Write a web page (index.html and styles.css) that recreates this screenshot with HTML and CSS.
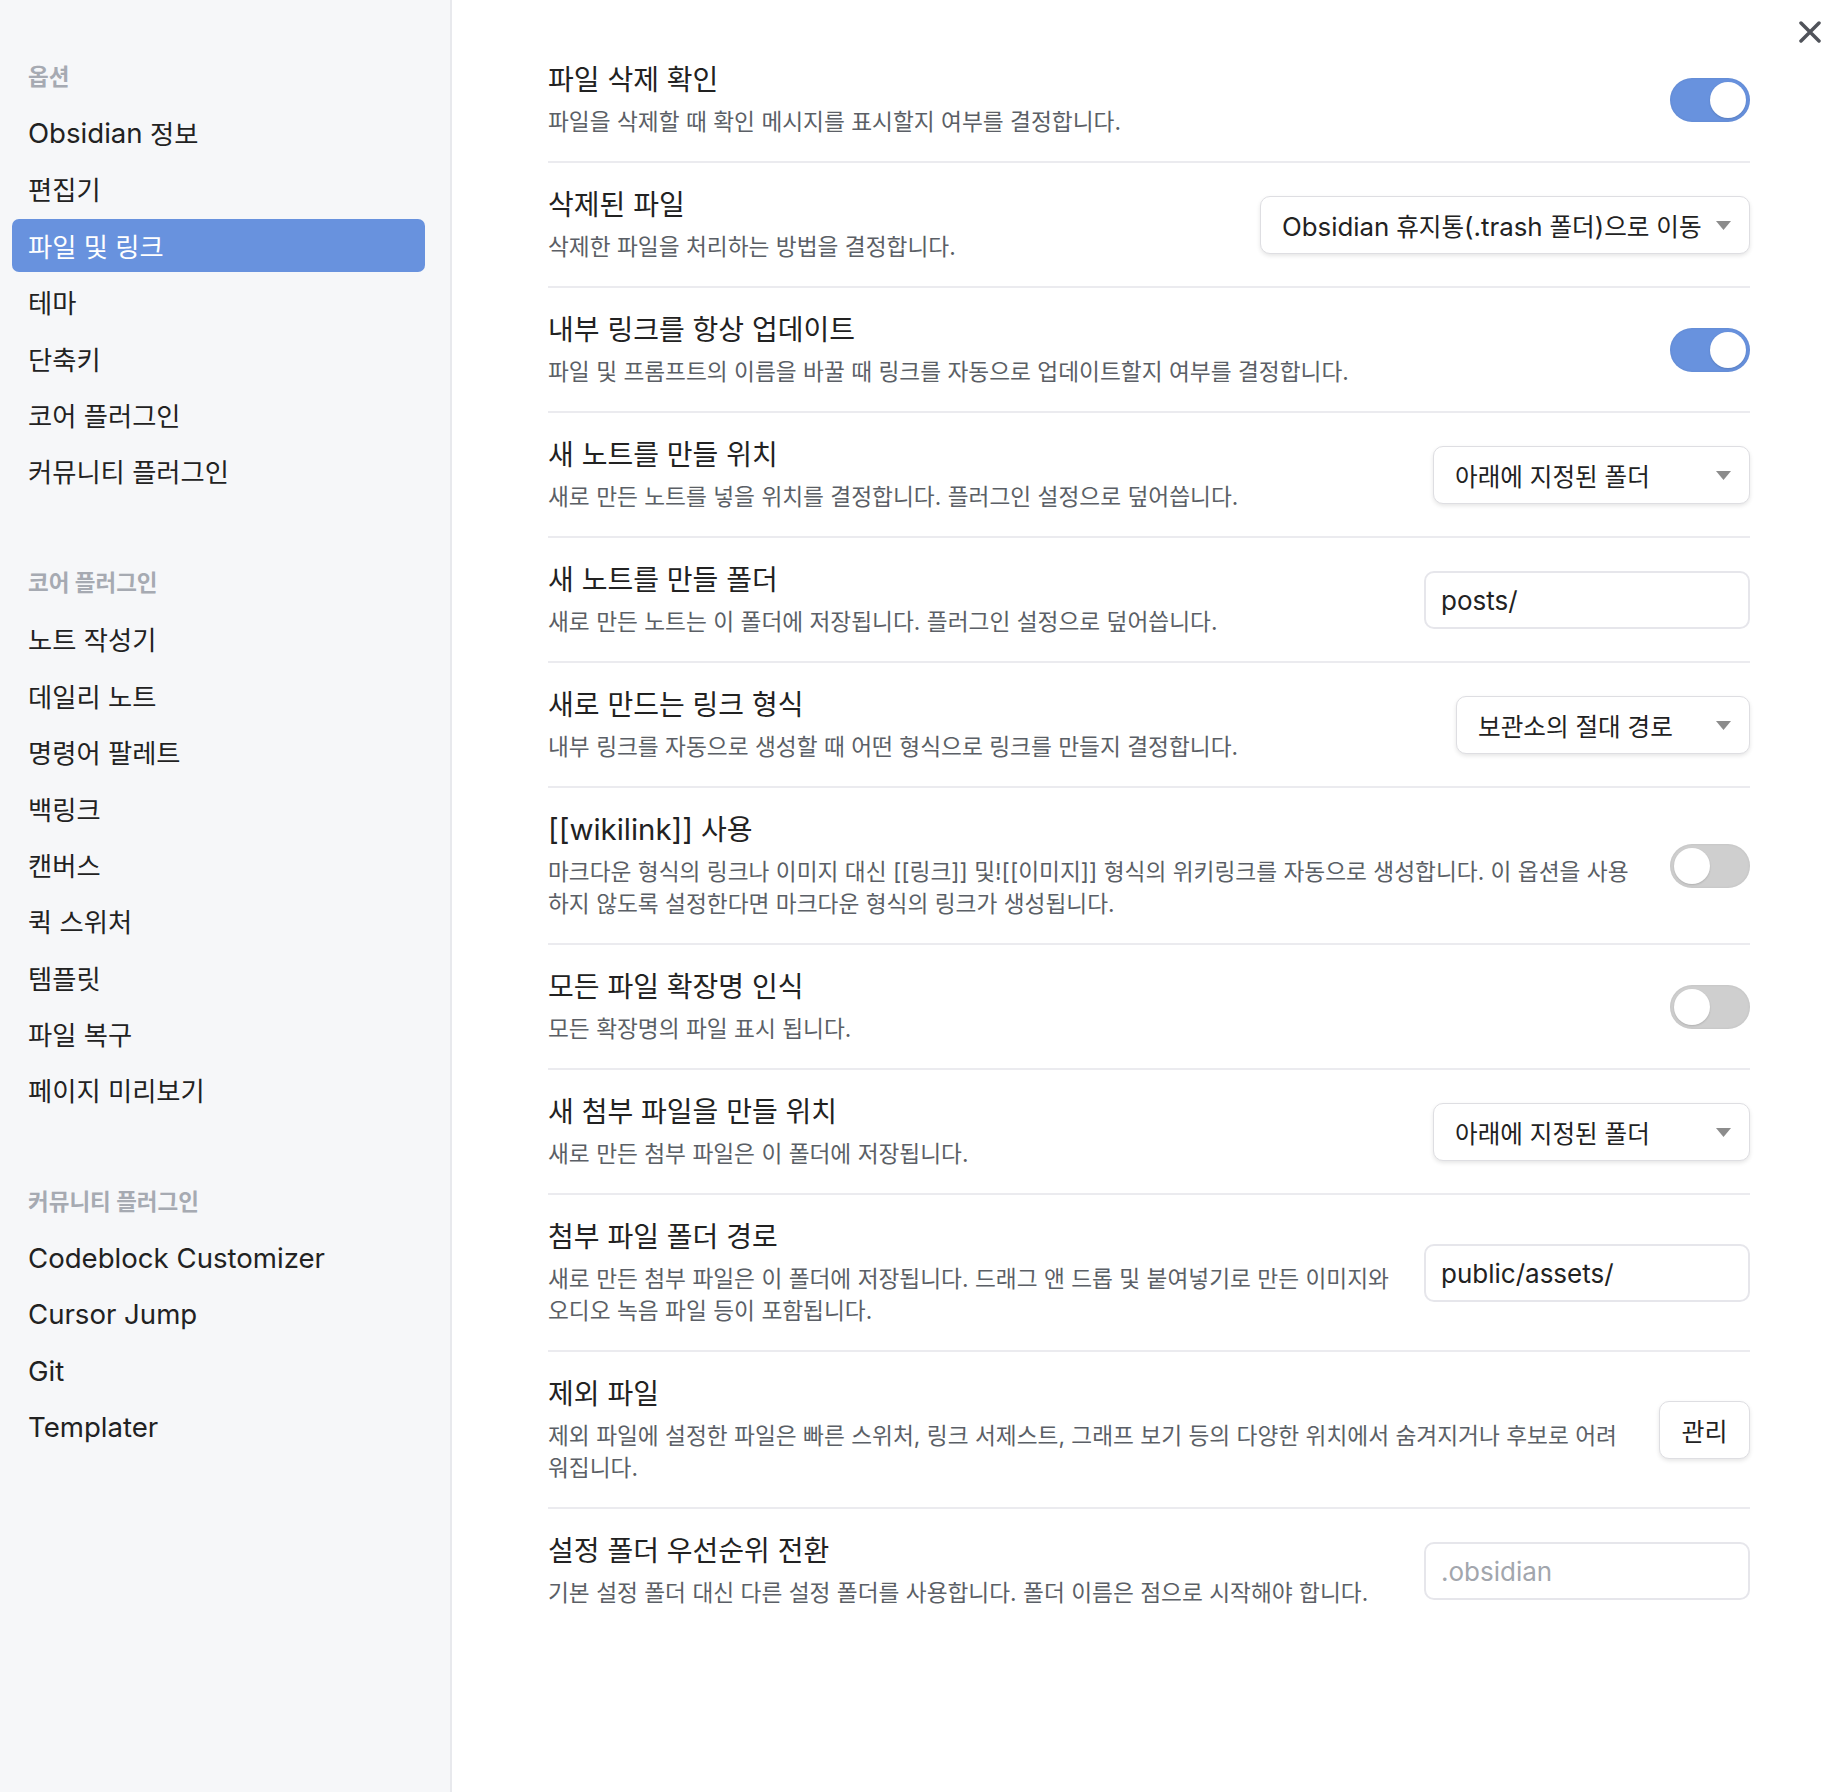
FILE: index.html
```html
<!DOCTYPE html>
<html lang="ko">
<head>
  <meta charset="UTF-8">
  <meta name="viewport" content="width=device-width, initial-scale=1.0">
  <link rel="stylesheet" href="styles.css">
  <title>설정 - 파일 및 링크</title>
</head>
<body>

<nav class="sidebar">
  <div class="nav-group">
    <div class="nav-header">옵션</div>
    <div class="nav-item"><span class="en">Obsidian</span>&nbsp;정보</div>
    <div class="nav-item">편집기</div>
    <div class="nav-item active">파일 및 링크</div>
    <div class="nav-item">테마</div>
    <div class="nav-item">단축키</div>
    <div class="nav-item">코어 플러그인</div>
    <div class="nav-item">커뮤니티 플러그인</div>
  </div>
  <div class="nav-group">
    <div class="nav-header">코어 플러그인</div>
    <div class="nav-item">노트 작성기</div>
    <div class="nav-item">데일리 노트</div>
    <div class="nav-item">명령어 팔레트</div>
    <div class="nav-item">백링크</div>
    <div class="nav-item">캔버스</div>
    <div class="nav-item">퀵 스위처</div>
    <div class="nav-item">템플릿</div>
    <div class="nav-item">파일 복구</div>
    <div class="nav-item">페이지 미리보기</div>
  </div>
  <div class="nav-group">
    <div class="nav-header">커뮤니티 플러그인</div>
    <div class="nav-item en">Codeblock Customizer</div>
    <div class="nav-item en">Cursor Jump</div>
    <div class="nav-item en">Git</div>
    <div class="nav-item en">Templater</div>
  </div>
</nav>

<main class="content">
  <button class="close-btn" aria-label="닫기">
    <svg width="22" height="22" viewBox="0 0 22 22">
      <path d="M2 2 L20 20 M20 2 L2 20" stroke="#50535a" stroke-width="3.5" stroke-linecap="round" fill="none"/>
    </svg>
  </button>

  <div class="setting">
    <div class="setting-info">
      <div class="setting-name">파일 삭제 확인</div>
      <div class="setting-desc">파일을 삭제할 때 확인 메시지를 표시할지 여부를 결정합니다.</div>
    </div>
    <div class="toggle on"><div class="knob"></div></div>
  </div>

  <div class="setting">
    <div class="setting-info">
      <div class="setting-name">삭제된 파일</div>
      <div class="setting-desc">삭제한 파일을 처리하는 방법을 결정합니다.</div>
    </div>
    <div class="dropdown dropdown-wide">
      <span><span class="en">Obsidian</span> 휴지통<span class="en">(.trash</span> 폴더<span class="en">)</span>으로 이동</span>
      <svg width="15" height="9" viewBox="0 0 15 9"><polygon points="0,0 15,0 7.5,9" fill="#8c8c8c"/></svg>
    </div>
  </div>

  <div class="setting">
    <div class="setting-info">
      <div class="setting-name">내부 링크를 항상 업데이트</div>
      <div class="setting-desc">파일 및 프롬프트의 이름을 바꿀 때 링크를 자동으로 업데이트할지 여부를 결정합니다.</div>
    </div>
    <div class="toggle on"><div class="knob"></div></div>
  </div>

  <div class="setting">
    <div class="setting-info">
      <div class="setting-name">새 노트를 만들 위치</div>
      <div class="setting-desc">새로 만든 노트를 넣을 위치를 결정합니다. 플러그인 설정으로 덮어씁니다.</div>
    </div>
    <div class="dropdown dropdown-mid">
      <span>아래에 지정된 폴더</span>
      <svg width="15" height="9" viewBox="0 0 15 9"><polygon points="0,0 15,0 7.5,9" fill="#8c8c8c"/></svg>
    </div>
  </div>

  <div class="setting">
    <div class="setting-info">
      <div class="setting-name">새 노트를 만들 폴더</div>
      <div class="setting-desc">새로 만든 노트는 이 폴더에 저장됩니다. 플러그인 설정으로 덮어씁니다.</div>
    </div>
    <input class="text-input" type="text" value="posts/">
  </div>

  <div class="setting">
    <div class="setting-info">
      <div class="setting-name">새로 만드는 링크 형식</div>
      <div class="setting-desc">내부 링크를 자동으로 생성할 때 어떤 형식으로 링크를 만들지 결정합니다.</div>
    </div>
    <div class="dropdown dropdown-narrow">
      <span>보관소의 절대 경로</span>
      <svg width="15" height="9" viewBox="0 0 15 9"><polygon points="0,0 15,0 7.5,9" fill="#8c8c8c"/></svg>
    </div>
  </div>

  <div class="setting">
    <div class="setting-info">
      <div class="setting-name"><span class="en">[[wikilink]]</span> 사용</div>
      <div class="setting-desc">마크다운 형식의 링크나 이미지 대신 [[링크]] 및![[이미지]] 형식의 위키링크를 자동으로 생성합니다. 이 옵션을 사용하지 않도록 설정한다면 마크다운 형식의 링크가 생성됩니다.</div>
    </div>
    <div class="toggle"><div class="knob"></div></div>
  </div>

  <div class="setting">
    <div class="setting-info">
      <div class="setting-name">모든 파일 확장명 인식</div>
      <div class="setting-desc">모든 확장명의 파일 표시 됩니다.</div>
    </div>
    <div class="toggle"><div class="knob"></div></div>
  </div>

  <div class="setting">
    <div class="setting-info">
      <div class="setting-name">새 첨부 파일을 만들 위치</div>
      <div class="setting-desc">새로 만든 첨부 파일은 이 폴더에 저장됩니다.</div>
    </div>
    <div class="dropdown dropdown-mid">
      <span>아래에 지정된 폴더</span>
      <svg width="15" height="9" viewBox="0 0 15 9"><polygon points="0,0 15,0 7.5,9" fill="#8c8c8c"/></svg>
    </div>
  </div>

  <div class="setting">
    <div class="setting-info">
      <div class="setting-name">첨부 파일 폴더 경로</div>
      <div class="setting-desc">새로 만든 첨부 파일은 이 폴더에 저장됩니다. 드래그 앤 드롭 및 붙여넣기로 만든 이미지와 오디오 녹음 파일 등이 포함됩니다.</div>
    </div>
    <input class="text-input" type="text" value="public/assets/">
  </div>

  <div class="setting">
    <div class="setting-info">
      <div class="setting-name">제외 파일</div>
      <div class="setting-desc">제외 파일에 설정한 파일은 빠른 스위처, 링크 서제스트, 그래프 보기 등의 다양한 위치에서 숨겨지거나 후보로 어려워집니다.</div>
    </div>
    <button class="btn">관리</button>
  </div>

  <div class="setting">
    <div class="setting-info">
      <div class="setting-name">설정 폴더 우선순위 전환</div>
      <div class="setting-desc">기본 설정 폴더 대신 다른 설정 폴더를 사용합니다. 폴더 이름은 점으로 시작해야 합니다.</div>
    </div>
    <input class="text-input" type="text" placeholder=".obsidian">
  </div>
</main>

</body>
</html>
```

FILE: styles.css
```css
body {
  margin: 0;
  height: 100vh;
  display: flex;
  font-family: Inter, "Noto Sans CJK KR", sans-serif;
  color: #222222;
  background-color: #ffffff;
  overflow: hidden;
}

/* latin runs are set a bit larger so they sit with the hangul like the app font */
.en {
  font-size: 1.05em;
}

.sidebar {
  width: 452px;
  flex-shrink: 0;
  box-sizing: border-box;
  padding: 65px 25px 0 12px;
  background-color: #f6f7f9;
  border-right: 2px solid #e8e9ed;
}

.nav-group + .nav-group {
  margin-top: 74px;
}

.nav-header {
  padding-left: 16px;
  margin-bottom: 17px;
  font-size: 22.5px;
  line-height: 24px;
  font-weight: 700;
  color: #a6aab2;
}

.nav-item {
  height: 53px;
  display: flex;
  align-items: center;
  padding: 0 16px;
  margin-bottom: 3.4px;
  border-radius: 7px;
  font-size: 26.3px;
  color: #222222;
  white-space: nowrap;
}

.nav-item.en {
  font-size: 27.6px;
}

.nav-item.active {
  background-color: #6892de;
  color: #ffffff;
}

.content {
  flex: 1;
  position: relative;
  padding: 38px 82px 0 96px;
}

.close-btn {
  position: absolute;
  top: 21px;
  right: 11px;
  width: 22px;
  height: 22px;
  padding: 0;
  border: none;
  background: none;
  display: flex;
}

.setting {
  display: flex;
  align-items: center;
  padding: 24px 0 23px;
  border-top: 2px solid #ebebef;
}

.setting:first-of-type {
  border-top: none;
}

.setting-info {
  flex: 1;
  min-width: 0;
  margin-right: 32px;
}

.setting-name {
  font-size: 28px;
  line-height: 36px;
  color: #222222;
}

.setting-desc {
  margin-top: 8px;
  font-size: 22.7px;
  line-height: 32px;
  color: #5b5f66;
}

.toggle {
  position: relative;
  flex-shrink: 0;
  width: 80px;
  height: 44px;
  border-radius: 22px;
  background-color: #cfcfcf;
  box-shadow: inset 0 0 3px rgba(0, 0, 0, 0.08);
}

.toggle.on {
  background-color: #6892de;
}

.knob {
  position: absolute;
  top: 4px;
  left: 4px;
  width: 36px;
  height: 36px;
  border-radius: 50%;
  background-color: #ffffff;
  box-shadow: 0 1px 2px rgba(0, 0, 0, 0.15);
}

.toggle.on .knob {
  left: 40px;
}

.dropdown {
  flex-shrink: 0;
  height: 58px;
  box-sizing: border-box;
  display: flex;
  align-items: center;
  justify-content: space-between;
  padding: 0 18px 0 21px;
  border: 1px solid #dedee2;
  border-radius: 10px;
  background-color: #ffffff;
  box-shadow: 0 2px 4px rgba(0, 0, 0, 0.1);
  font-size: 24.6px;
  color: #222222;
  white-space: nowrap;
}

.dropdown-wide {
  width: 490px;
}

.dropdown-mid {
  width: 317px;
}

.dropdown-narrow {
  width: 294px;
}

.text-input {
  flex-shrink: 0;
  width: 326px;
  height: 58px;
  box-sizing: border-box;
  padding: 0 15px;
  border: 2px solid #e6e6eb;
  border-radius: 10px;
  background-color: #ffffff;
  font-family: Inter, "Noto Sans CJK KR", sans-serif;
  font-size: 26px;
  color: #222222;
  outline: none;
}

.text-input::placeholder {
  color: #a2a6ad;
}

.btn {
  flex-shrink: 0;
  width: 91px;
  height: 58px;
  border: 1px solid #dedee2;
  border-radius: 10px;
  background-color: #ffffff;
  box-shadow: 0 2px 4px rgba(0, 0, 0, 0.1);
  font-family: Inter, "Noto Sans CJK KR", sans-serif;
  font-size: 25px;
  color: #222222;
}
```
